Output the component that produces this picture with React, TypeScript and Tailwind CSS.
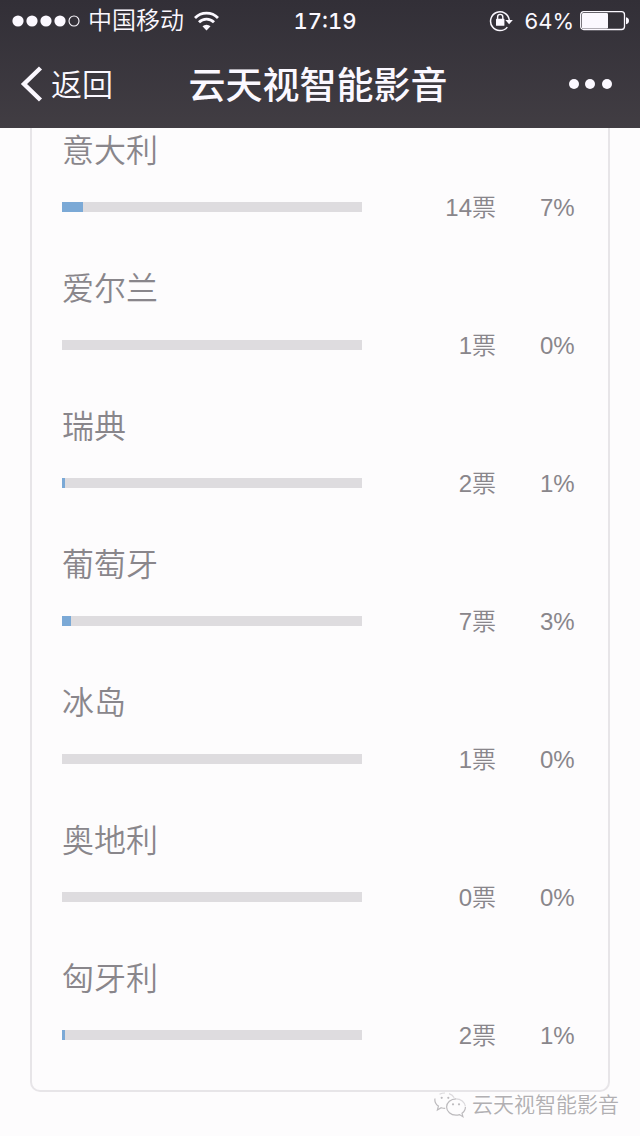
type Country = { name: string; votes: number; percent: number };

const countries: Country[] = [
  { name: "意大利", votes: 14, percent: 7 },
  { name: "爱尔兰", votes: 1, percent: 0 },
  { name: "瑞典", votes: 2, percent: 1 },
  { name: "葡萄牙", votes: 7, percent: 3 },
  { name: "冰岛", votes: 1, percent: 0 },
  { name: "奥地利", votes: 0, percent: 0 },
  { name: "匈牙利", votes: 2, percent: 1 },
];

function SignalDots() {
  return (
    <svg width="68" height="12" viewBox="0 0 68 12" aria-hidden="true">
      <g fill="#fbf8ff">
        <circle cx="6" cy="6" r="5.6" />
        <circle cx="20" cy="6" r="5.6" />
        <circle cx="34" cy="6" r="5.6" />
        <circle cx="48" cy="6" r="5.6" />
      </g>
      <circle cx="62" cy="6" r="5" fill="none" stroke="#fbf8ff" strokeWidth="1.1" />
    </svg>
  );
}

function WifiIcon() {
  return (
    <svg width="28" height="20" viewBox="0 0 28 20" fill="none" stroke="#fbf8ff" strokeWidth="2.8" aria-hidden="true">
      <path d="M3 7a16.2 16.2 0 0 1 23 0" />
      <path d="M7 11.300a10.500 10.500 0 0 1 15 0" />
      <path d="M14.500 19.500l-4-4.200a5.700 5.700 0 0 1 8 0z" fill="#fbf8ff" stroke="none" />
    </svg>
  );
}

function RotationLockIcon() {
  return (
    <svg width="24" height="22" viewBox="0 0 24 22" fill="none" stroke="#fbf8ff" aria-hidden="true">
      <path d="M18.3 17.1A9.4 9.4 0 1 1 20.3 10" strokeWidth="1.5" />
      <path d="M16.4 10h7.4l-3.7 4.200z" fill="#fbf8ff" stroke="none" />
      <rect x="7" y="8.8" width="8.4" height="7" rx="0.6" fill="#fbf8ff" stroke="none" />
      <path d="M8.6 9.2V7a2.6 2.6 0 0 1 5.2 0v2.2" strokeWidth="1.4" />
    </svg>
  );
}

function BatteryIcon() {
  return (
    <svg width="50" height="20" viewBox="0 0 50 20" aria-hidden="true">
      <rect x="0.7" y="0.7" width="43.8" height="17.8" rx="3" fill="none" stroke="#fbf8ff" strokeWidth="1.3" />
      <rect x="2" y="2" width="26" height="15.4" rx="1.2" fill="#fbf8ff" />
      <path d="M46 6.2c2 .3 3 1.8 3 3.5s-1 3.200-3 3.500z" fill="#fbf8ff" />
    </svg>
  );
}

function ChatBubblesIcon() {
  return (
    <svg width="34" height="26" viewBox="0 0 34 26" fill="none" stroke="#bcbabd" strokeWidth="1.200" aria-hidden="true">
      <path d="M1 6.500c-.6 3.300 1 6 3.400 7.600l-1 3.800 3.800-2.200c1.600.5 2.600.6 4 .6" />
      <path d="M5.500 2.300C7 1.500 8.800 1 11 1M15 1.600c2.400.8 4.200 2.200 5.200 4.200" stroke="#dbd9dc" />
      <path d="M22 6.800c-5.200 0-9.400 3.700-9.400 8.200s4.200 8.200 9.400 8.200c1.200 0 2.400-.2 3.500-.6l3.400 2.100-.9-3.400c2.100-1.500 3.400-3.800 3.400-6.300" />
      <path d="M22 6.800c4.800 0 8.800 3.300 9.400 7.600" stroke="#dbd9dc" />
      <g fill="#bcbabd" stroke="none">
        <circle cx="7.700" cy="5.800" r="1.100" />
        <circle cx="14.300" cy="5.800" r="1.100" />
        <circle cx="19" cy="12.300" r="1.100" />
        <circle cx="25" cy="12.300" r="1.100" />
      </g>
    </svg>
  );
}

function StatusBar() {
  return (
    <div className="grid h-10 grid-cols-[1fr_auto_1fr] items-center pt-0.5 pr-2.5 pl-3 text-2xl leading-9">
      <div className="flex items-center gap-2">
        <SignalDots />
        <span className="font-[350]">中国移动</span>
        <WifiIcon />
      </div>
      <time className="ml-2 font-['Inter'] text-[22px] font-medium tabular-nums">17:19</time>
      <div className="flex items-center justify-end">
        <RotationLockIcon />
        <span className="mr-1.5 ml-3 font-['Inter'] text-[22px]">64%</span>
        <BatteryIcon />
      </div>
    </div>
  );
}

function NavBar() {
  return (
    <div className="grid h-[88px] grid-cols-[1fr_auto_1fr] items-center pr-6 pl-5">
      <button type="button" className="flex items-center gap-2 justify-self-start text-[31px] leading-10 font-[350]">
        <svg width="23" height="36" viewBox="0 0 23 36" fill="none" stroke="#fbf8ff" strokeWidth="4.400" aria-hidden="true">
          <path d="M20.500 2L4 18l16.500 16" />
        </svg>
        <span className="pt-1">返回</span>
      </button>
      <h1 className="pt-1.5 text-[37px] leading-[48px] font-medium">云天视智能影音</h1>
      <button type="button" aria-label="更多" className="justify-self-end p-1">
        <svg width="44" height="12" viewBox="0 0 44 12" fill="#fbf8ff" aria-hidden="true">
          <circle cx="6" cy="6" r="5" />
          <circle cx="22" cy="6" r="5" />
          <circle cx="39" cy="6" r="5" />
        </svg>
      </button>
    </div>
  );
}

function PollRow({ name, votes, percent }: Country) {
  return (
    <li>
      <h2 className="text-[32px] leading-[46px] font-[350]">{name}</h2>
      <div className="mt-4 flex h-[34px] items-center text-2xl">
        <div
          role="progressbar"
          aria-label={name}
          aria-valuenow={percent}
          aria-valuemin={0}
          aria-valuemax={100}
          className="h-[10px] flex-1 bg-[#dedcdf]"
        >
          <div className="h-full bg-[#7ba9d6]" style={{ width: `${percent}%` }} />
        </div>
        <span className="w-[134px] pt-0.5 text-right font-[350]">{votes}票</span>
        <span className="w-[82px] pt-0.5 pl-11">{percent}%</span>
      </div>
    </li>
  );
}

export default function App() {
  return (
    <div className="relative min-h-screen bg-[#fdfcfd] font-['Liberation_Sans','Noto_Sans_CJK_SC',sans-serif] text-[#89868b]">
      <header className="bg-linear-to-b from-[#322f37] to-[#413d43] text-[#fbf8ff]">
        <StatusBar />
        <NavBar />
      </header>
      <main className="px-[30px]">
        <ul className="flex flex-col gap-[42px] rounded-b-[10px] border-2 border-t-0 border-[#e7e5e8] px-[30px] pb-[38px]">
          {countries.map((country) => (
            <PollRow key={country.name} {...country} />
          ))}
        </ul>
      </main>
      <div className="absolute right-[21px] bottom-[15px] flex items-center gap-1 text-[21px] leading-8 font-[350] text-[#b1afb2] [text-shadow:-1px_-1px_0_#ffffff]">
        <ChatBubblesIcon />
        <span>云天视智能影音</span>
      </div>
    </div>
  );
}
